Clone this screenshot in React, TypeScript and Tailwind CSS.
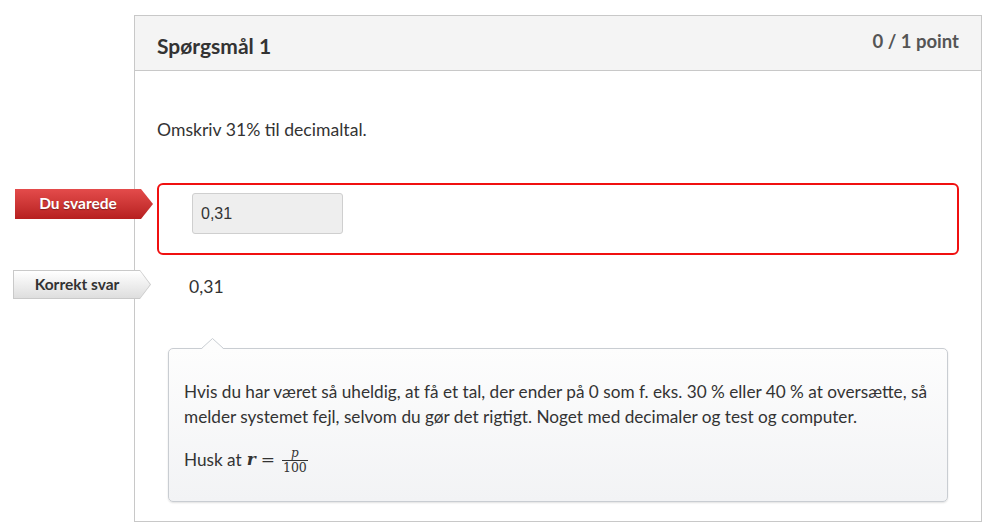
import React from 'react';

const lato = { fontFamily: 'Lato, "Open Sans", sans-serif' };
const serif = { fontFamily: '"DejaVu Serif", "Liberation Serif", serif' };

const App: React.FC = () => {
  return (
    <div className="w-[999px] h-[530px] bg-white overflow-hidden pt-[15px] text-[#333]" style={lato}>
      <div className="ml-[134px] w-[848px] h-[507px] border border-[#c8c8c8] flex flex-col">
        {/* Header */}
        <div className="h-[55px] bg-[#f4f4f4] border-b border-[#c8c8c8] flex items-center justify-between pl-[22px] pr-[22px]">
          <h2 className="text-[21px] font-bold text-[#333] mt-[6px]">Spørgsmål 1</h2>
          <span className="text-[18.5px] font-bold text-[#555] mt-[-3px]">0 / 1 point</span>
        </div>

        {/* Body */}
        <div className="flex flex-col px-[22px]">
          <p className="text-[17.6px] leading-[24px] mt-[47px]">Omskriv 31% til decimaltal.</p>

          {/* Your answer */}
          <div className="relative mt-[41px]">
            <div className="absolute left-[-142px] top-[6px] w-[138px] h-[30px] [clip-path:polygon(0_0,126px_0,100%_50%,126px_100%,0_100%)] bg-gradient-to-b from-[#e44b4b] to-[#b71f1f] flex items-center">
              <span className="w-[126px] text-center text-white font-bold text-[15.5px] [text-shadow:0_1px_1px_rgba(0,0,0,0.35)]">Du svarede</span>
            </div>
            <div className="border-2 border-[#f01010] rounded-[6px] h-[72px] pl-[33px] pt-[8px]">
              <div className="w-[151px] h-[41px] bg-[#eeeeee] border border-[#cfcfcf] rounded-[3px] flex items-center pl-[8px]">
                <span className="text-[16px] text-[#333]" style={{ fontFamily: '"Liberation Sans", Arial, sans-serif' }}>0,31</span>
              </div>
            </div>
          </div>

          {/* Correct answer */}
          <div className="relative mt-[15px] h-[36px] flex items-center pl-[32px]">
            <div className="absolute left-[-144px] top-[0px] w-[138px] h-[29px] [clip-path:polygon(0_0,127px_0,100%_50%,127px_100%,0_100%)] bg-[#c9c9c9]">
              <div className="absolute inset-[1px] [clip-path:polygon(0_0,126px_0,100%_50%,126px_100%,0_100%)] bg-gradient-to-b from-[#ffffff] to-[#dedede] flex items-center">
                <span className="w-[126px] text-center text-[#333] font-bold text-[15.5px]">Korrekt svar</span>
              </div>
            </div>
            <span className="text-[17.6px] mt-[-2px]">0,31</span>
          </div>

          {/* Comment */}
          <div className="relative ml-[11px] mr-[11px] mt-[42px]">
            <svg className="absolute left-[33px] top-[-10px]" width="23" height="12" viewBox="0 0 23 12">
              <polygon points="0.5,11 11.5,0.5 22.5,11" fill="#fdfdfd" />
              <polyline points="0.5,10.5 11.5,0.5 22.5,10.5" fill="none" stroke="#c9cdd2" strokeWidth="1" />
            </svg>
            <div className="h-[154px] border border-[#c9cdd2] rounded-[5px] bg-gradient-to-b from-[#fdfdfd] to-[#f2f3f5] shadow-[0_1px_2px_rgba(0,0,0,0.12)] pl-[15px] pr-[6px] pt-[30px] text-[17.2px] leading-[25px]">
              <p>
                Hvis du har været så uheldig, at få et tal, der ender på 0 som f. eks. 30 % eller 40 % at oversætte, så melder systemet fejl, selvom du gør det rigtigt. Noget med decimaler og test og computer.
              </p>
              <p className="mt-[15px] flex items-center">
                <span>Husk at</span>
                <span className="ml-[5px] flex items-center" style={serif}>
                  <span className="italic font-bold text-[17px]">r</span>
                  <span className="text-[17px] ml-[5px] mr-[7px]">=</span>
                  <span className="inline-flex flex-col items-center leading-[12px] mt-[3px]">
                    <span className="italic text-[12px] pb-[1px]">p</span>
                    <span className="text-[12.5px] border-t border-[#333] pt-[1px] px-[1px]">100</span>
                  </span>
                </span>
              </p>
            </div>
          </div>
        </div>
      </div>
    </div>
  );
};

export default App;
